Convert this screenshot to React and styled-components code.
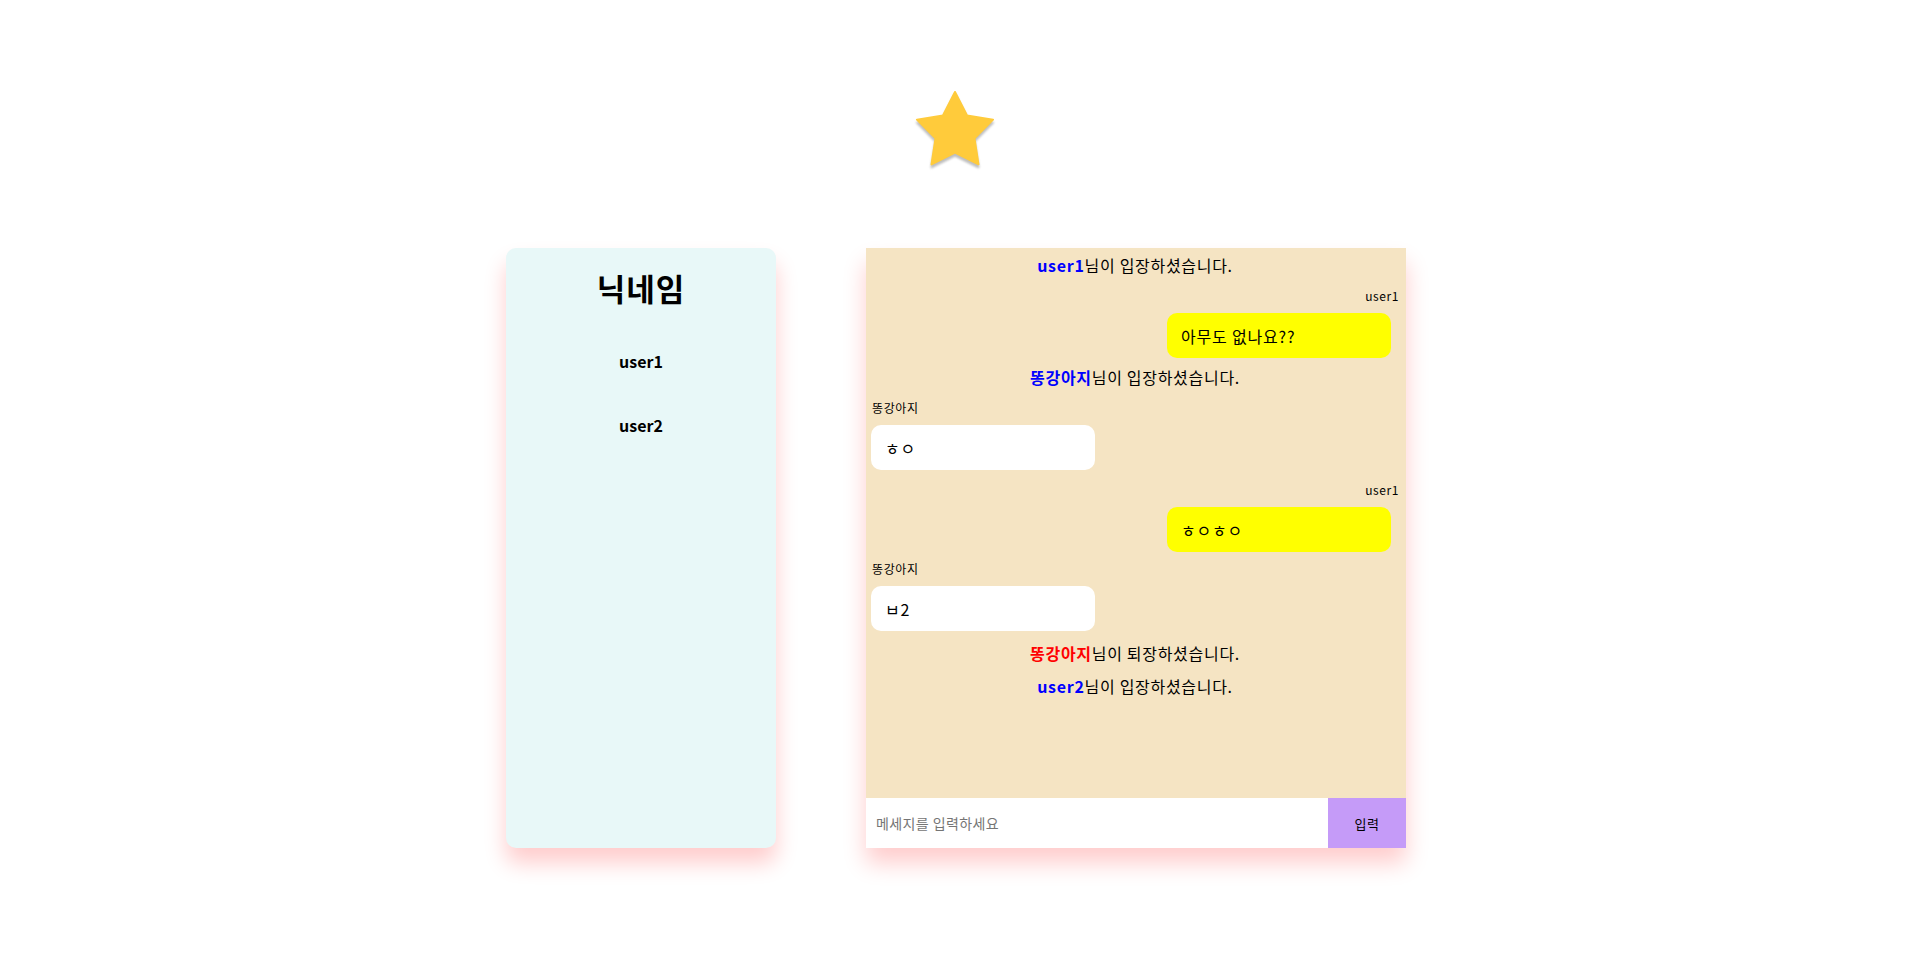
import React from 'react'
import styled, { createGlobalStyle } from 'styled-components'

const users = ['user1', 'user2']

const messages = [
    { type: 'system', name: 'user1', text: '님이 입장하셨습니다.', color: '#0000ff' },
    { type: 'mine', name: 'user1', text: '아무도 없나요??' },
    { type: 'system', name: '똥강아지', text: '님이 입장하셨습니다.', color: '#0000ff' },
    { type: 'other', name: '똥강아지', text: 'ㅎㅇ' },
    { type: 'mine', name: 'user1', text: 'ㅎㅇㅎㅇ' },
    { type: 'other', name: '똥강아지', text: 'ㅂ2' },
    { type: 'system', name: '똥강아지', text: '님이 퇴장하셨습니다.', color: '#ff0000' },
    { type: 'system', name: 'user2', text: '님이 입장하셨습니다.', color: '#0000ff' },
]

// star points, outer radius 40 / inner 20, centre (45,46)
const starPoints = Array.from({ length: 10 }, (_, i) => {
    const a = (-90 + 36 * i) * Math.PI / 180
    const rad = i % 2 === 0 ? 40 : 20.5
    return `${(45 + rad * Math.cos(a)).toFixed(2)},${(46 + rad * Math.sin(a)).toFixed(2)}`
}).join(' ')

function Star() {
    return (
        <StarIcon width="90" height="90" viewBox="0 0 90 90">
            <polygon points={starPoints} fill="#ffcb3b" stroke="#ffcb3b" strokeWidth="2" strokeLinejoin="round" />
        </StarIcon>
    )
}

export default function App() {
    return (
        <>
            <GlobalStyle />
            <Page>
                <Header>
                    <Star />
                </Header>

                <Main>
                    <Sidebar>
                        <Title>닉네임</Title>
                        <UserList>
                            {users.map(u => <UserName key={u}>{u}</UserName>)}
                        </UserList>
                    </Sidebar>

                    <ChatBox>
                        <MessageList>
                            {messages.map((m, i) => m.type === 'system' ? (
                                <SystemLine key={i}>
                                    <Who color={m.color}>{m.name}</Who>{m.text}
                                </SystemLine>
                            ) : (
                                <MessageGroup key={i} mine={m.type === 'mine'}>
                                    <Sender mine={m.type === 'mine'}>{m.name}</Sender>
                                    <Bubble mine={m.type === 'mine'}>{m.text}</Bubble>
                                </MessageGroup>
                            ))}
                        </MessageList>
                        <InputBar>
                            <MessageInput placeholder="메세지를 입력하세요" />
                            <SendButton>입력</SendButton>
                        </InputBar>
                    </ChatBox>
                </Main>
            </Page>
        </>
    )
}

const GlobalStyle = createGlobalStyle`
    body {
        margin: 0;
        background: #ffffff;
        font-family: "Noto Sans CJK KR", "Noto Sans", sans-serif;
        color: #000;
    }
`

const Page = styled.div`
    width: 100%;
    min-height: 966px;
`

const Header = styled.div`
    height: 248px;
    box-sizing: border-box;
    padding-top: 86px;
    display: flex;
    justify-content: center;
    align-items: flex-start;
`

const StarIcon = styled.svg`
    display: block;
    margin-left: -6px;
    filter: drop-shadow(0 3px 1px rgba(110, 110, 110, 0.45));
`

const Main = styled.div`
    display: flex;
    justify-content: center;
    gap: 90px;
    margin-left: -3px;
`

const Sidebar = styled.div`
    width: 270px;
    height: 600px;
    background-color: #e8f8f8;
    border-radius: 10px;
    box-shadow: 0 15px 22px rgba(255, 0, 0, 0.2);
    padding-top: 20px;
    box-sizing: border-box;
    text-align: center;
`

const Title = styled.div`
    font-size: 31px;
    font-weight: 700;
    line-height: 40px;
    letter-spacing: 1px;
`

const UserList = styled.div`
    margin-top: 41px;
    display: flex;
    flex-direction: column;
    gap: 40px;
`

const UserName = styled.div`
    font-size: 16px;
    font-weight: 700;
    line-height: 24px;
`

const ChatBox = styled.div`
    width: 540px;
    height: 600px;
    display: flex;
    flex-direction: column;
    box-shadow: 0 15px 22px rgba(255, 0, 0, 0.2);
`

const MessageList = styled.div`
    flex: 1;
    background-color: #f5e4c3;
    display: flex;
    flex-direction: column;
    gap: 9px;
    padding: 7px 7px 0 5px;
    overflow: hidden;
`

const SystemLine = styled.div`
    text-align: center;
    font-size: 16px;
    line-height: 20px;
    padding-bottom: 4px;
    letter-spacing: 0.7px;
`

const Who = styled.span`
    color: ${p => p.color};
    font-weight: 700;
`

const MessageGroup = styled.div`
    display: flex;
    flex-direction: column;
    align-items: ${p => (p.mine ? 'flex-end' : 'flex-start')};
    gap: 9px;
    margin-bottom: ${p => (p.mine ? '0' : '3px')};
`

const Sender = styled.div`
    font-size: 12px;
    line-height: 16px;
    letter-spacing: 0.6px;
    margin-left: ${p => (p.mine ? '0' : '1px')};
`

const Bubble = styled.div`
    width: 224px;
    height: 45px;
    box-sizing: border-box;
    padding: 0 14px;
    display: flex;
    align-items: center;
    border-radius: 10px;
    font-size: 16px;
    letter-spacing: 0.8px;
    background-color: ${p => (p.mine ? '#ffff00' : '#ffffff')};
    margin-right: ${p => (p.mine ? '8px' : '0')};
`

const InputBar = styled.div`
    height: 50px;
    display: flex;
    background: #ffffff;
`

const MessageInput = styled.input`
    flex: 1;
    border: none;
    outline: none;
    padding: 0 0 0 10px;
    font-family: inherit;
    font-size: 14px;
    letter-spacing: 0.4px;
    background: #ffffff;

    &::placeholder {
        color: #757575;
    }
`

const SendButton = styled.button`
    width: 78px;
    border: none;
    background-color: #c59bf8;
    font-family: inherit;
    font-size: 13px;
    letter-spacing: 0.5px;
    color: #000;
    cursor: pointer;
`
